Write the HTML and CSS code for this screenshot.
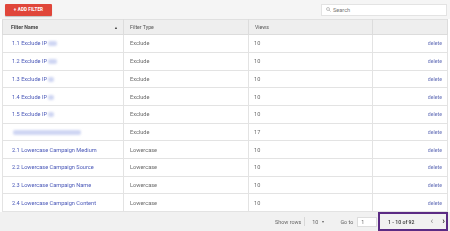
FILE: index.html
```html
<!DOCTYPE html>
<html>
<head>
<meta charset="utf-8">
<link rel="stylesheet" href="styles.css">
</head>
<body>
<div class="page">
  <div class="toolbar">
    <button class="add-btn">+ ADD FILTER</button>
    <div class="search">
      <svg class="search-icon" viewBox="0 0 10 10" width="5" height="5"><circle cx="4" cy="4" r="3" fill="none" stroke="#999" stroke-width="1.2"/><line x1="6.2" y1="6.2" x2="9.3" y2="9.3" stroke="#999" stroke-width="1.2"/></svg>
      <span class="search-ph">Search</span>
    </div>
  </div>
  <table class="grid">
    <colgroup><col class="c1"><col class="c2"><col class="c3"><col class="c4"></colgroup>
    <thead>
      <tr><th><div class="th-name"><span>Filter Name</span><span class="sort">&#9650;</span></div></th><th>Filter Type</th><th>Views</th><th></th></tr>
    </thead>
    <tbody>
      <tr><td><span class="lnk">1.1 Exclude IP <span class="blur b1"></span></span></td><td class="txt">Exclude</td><td class="txt">10</td><td class="del">delete</td></tr>
      <tr><td><span class="lnk">1.2 Exclude IP <span class="blur b1"></span></span></td><td class="txt">Exclude</td><td class="txt">10</td><td class="del">delete</td></tr>
      <tr><td><span class="lnk">1.3 Exclude IP <span class="blur b2"></span></span></td><td class="txt">Exclude</td><td class="txt">10</td><td class="del">delete</td></tr>
      <tr><td><span class="lnk">1.4 Exclude IP <span class="blur b2"></span></span></td><td class="txt">Exclude</td><td class="txt">10</td><td class="del">delete</td></tr>
      <tr><td><span class="lnk">1.5 Exclude IP <span class="blur b2"></span></span></td><td class="txt">Exclude</td><td class="txt">10</td><td class="del">delete</td></tr>
      <tr><td><span class="lnk"><span class="blur b3"></span></span></td><td class="txt">Exclude</td><td class="txt">17</td><td class="del">delete</td></tr>
      <tr><td><span class="lnk">2.1 Lowercase Campaign Medium</span></td><td class="txt">Lowercase</td><td class="txt">10</td><td class="del">delete</td></tr>
      <tr><td><span class="lnk">2.2 Lowercase Campaign Source</span></td><td class="txt">Lowercase</td><td class="txt">10</td><td class="del">delete</td></tr>
      <tr><td><span class="lnk">2.3 Lowercase Campaign Name</span></td><td class="txt">Lowercase</td><td class="txt">10</td><td class="del">delete</td></tr>
      <tr><td><span class="lnk">2.4 Lowercase Campaign Content</span></td><td class="txt">Lowercase</td><td class="txt">10</td><td class="del">delete</td></tr>
    </tbody>
  </table>
  <div class="footer">
    <span class="f-label">Show rows</span>
    <span class="f-sep"></span>
    <span class="f-select">10 <span class="caret">&#9662;</span></span>
    <span class="f-label goto">Go to</span>
    <span class="f-input">1</span>
    <div class="pager">
      <span class="range">1 - 10 of 92</span>
      <span class="prev">&lsaquo;</span>
      <span class="next">&rsaquo;</span>
    </div>
  </div>
</div>
</body>
</html>
```
FILE: styles.css
```css
html, body { margin: 0; padding: 0; background: #fff; }
body { font-family: Roboto, "Liberation Sans", Arial, sans-serif; color: #555; }
.page { width: 450px; height: 231px; display: flex; flex-direction: column; overflow: hidden; }

.toolbar {
  height: 21px; background: #f5f5f5; display: flex; align-items: center;
  justify-content: space-between; padding: 0 3px 0 5px; box-sizing: border-box;
}
.add-btn {
  width: 47px; height: 12px; background: #e0463a; color: #fff; border: none;
  font-family: inherit; font-size: 4.6px; font-weight: 700; padding: 0;
  border-radius: 1px; box-shadow: 0 1px 1px rgba(0,0,0,0.2); letter-spacing: 0.1px;
}
.search {
  width: 126px; height: 12px; box-sizing: border-box; background: #fff;
  border: 1px solid #e3e3e3; display: flex; align-items: center; gap: 2px; padding-left: 4px;
}
.search-icon { display: block; }
.search-ph { font-size: 5.6px; color: #777; }

.grid {
  margin-left: 2px; width: 445px; border-collapse: collapse; table-layout: fixed;
  font-size: 5.6px; opacity: 0.999;
}
.c1 { width: 121px; } .c2 { width: 125px; } .c3 { width: 124px; } .c4 { width: 75px; }
.grid th {
  height: 15px; background: #eeeeee; text-align: left; font-weight: 700; color: #444;
  font-size: 5.2px; padding: 0 0 0 8px; border-top: 1px solid #e0e0e0; border-bottom: 1px solid #dcdcdc;
  border-right: 1px solid #dcdcdc; box-sizing: border-box;
}
.grid th:first-child { border-left: 1px solid #dcdcdc; }
.grid th:nth-child(2), .grid th:nth-child(3) { font-weight: 400; color: #555; padding-left: 6px; }
.th-name { display: flex; justify-content: space-between; align-items: center; padding-right: 5px; }
.sort { font-size: 4px; color: #444; }
.grid td {
  height: 17.7px; padding: 0 0 0 6px; border-bottom: 1px solid #e3e3e3; border-right: 1px solid #e3e3e3;
  box-sizing: border-box; white-space: nowrap;
}
.grid td:first-child { padding-left: 9px; border-left: 1px solid #e3e3e3; }
.grid td.txt { color: #6a6a6a; }
.grid td:nth-child(3) { padding-left: 5px; }
.lnk { color: #4a58b8; }
.grid td.del { text-align: right; padding-right: 5px; color: #6570b8; font-size: 5.2px; }
.blur { display: inline-block; vertical-align: middle; background: #cfd6f3; filter: blur(1.2px); height: 5px; border-radius: 2px; }
.b1 { width: 9px; }
.b2 { width: 6px; }
.b3 { width: 68px; margin-left: 1px; }

.footer {
  flex: 1; background: #f1f1f1; display: flex; align-items: center; font-size: 5.4px; color: #666;
  padding-left: 275px; padding-right: 2px; box-sizing: border-box; white-space: nowrap; opacity: 0.999;
}
.f-sep { width: 1px; height: 9px; background: #d8d8d8; margin: 0 7px 0 3px; }
.f-select { display: inline-flex; align-items: center; gap: 4px; }
.caret { font-size: 4px; }
.goto { margin-left: 16px; }
.f-input {
  width: 20px; height: 10px; box-sizing: border-box; background: #fff; border: 1px solid #ddd;
  margin-left: 4px; padding-left: 3px; display: flex; align-items: center;
}
.pager {
  margin-left: auto; width: 70px; height: 19px; box-sizing: border-box; border: 2px solid #5b2b84;
  display: flex; align-items: center; padding-left: 8px; align-self: flex-end; flex-shrink: 0;
}
.range { color: #333; font-weight: 500; font-size: 5.2px; }
.prev { margin-left: 16px; font-size: 9px; color: #888; line-height: 1; }
.next { margin-left: 9px; font-size: 9px; color: #333; font-weight: 700; line-height: 1; }
```
